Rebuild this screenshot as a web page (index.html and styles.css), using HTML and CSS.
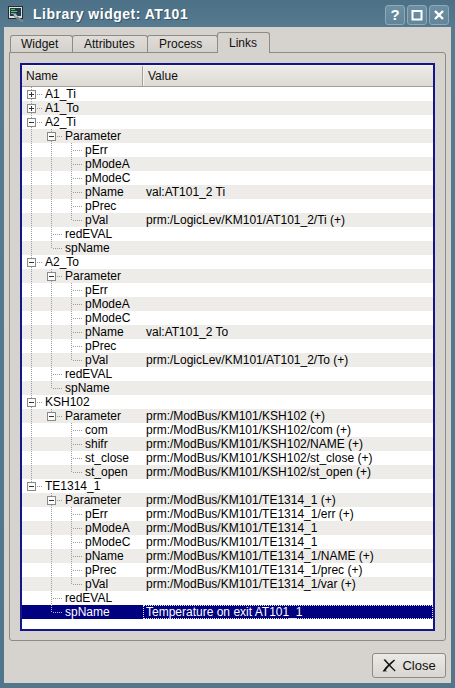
FILE: index.html
```html
<!DOCTYPE html>
<html>
<head>
<meta charset="utf-8">
<link rel="stylesheet" href="styles.css">
</head>
<body>
<div class="window">
  <div class="titlebar">
    <svg class="appicon" width="16" height="16" viewBox="0 0 16 16">
      <rect x="0.5" y="0.5" width="14" height="12" fill="#d9dee3" stroke="#2b2b2b"/>
      <rect x="2" y="2" width="11" height="8" fill="#203c4c"/>
      <path d="M3 3.5h4M3 5.5h6M3 7.5h3" stroke="#62c46e" stroke-width="1"/>
      <path d="M7 10 L14 15" stroke="#7f858a" stroke-width="2.6" stroke-linecap="round"/>
      <path d="M6.2 7.8 L9 11" stroke="#b5babe" stroke-width="2.4"/>
    </svg>
    <div class="title">Library widget: AT101</div>
    <div class="tbuttons">
      <div class="tbtn help">?</div>
      <div class="tbtn"><svg width="12" height="12" viewBox="0 0 12 12"><rect x="1.5" y="2" width="9" height="8.5" fill="none" stroke="#fff" stroke-width="2"/></svg></div>
      <div class="tbtn"><svg width="12" height="12" viewBox="0 0 12 12"><path d="M2 2 L10 10 M10 2 L2 10" stroke="#fff" stroke-width="2.4"/></svg></div>
    </div>
  </div>
  <div class="client">
    <div class="tabbar">
      <div class="tab w1">Widget</div>
      <div class="tab w2">Attributes</div>
      <div class="tab w3">Process</div>
      <div class="tab w4 sel">Links</div>
    </div>
    <div class="pane">
      <div class="frame">
        <div class="header">
          <div class="hcell hname">Name</div>
          <div class="hcell hval">Value</div>
        </div>
        <div class="rows">
          <div class="row"><div class="name"><span class="g tee"><span class="box plus"></span></span><span class="t">A1_Ti</span></div><div class="val"></div></div>
          <div class="row"><div class="name"><span class="g tee"><span class="box plus"></span></span><span class="t">A1_To</span></div><div class="val"></div></div>
          <div class="row"><div class="name"><span class="g tee"><span class="box minus"></span></span><span class="t">A2_Ti</span></div><div class="val"></div></div>
          <div class="row"><div class="name"><span class="g pipe"></span><span class="g tee"><span class="box minus"></span></span><span class="t">Parameter</span></div><div class="val"></div></div>
          <div class="row"><div class="name"><span class="g pipe"></span><span class="g pipe"></span><span class="g tee"></span><span class="t">pErr</span></div><div class="val"></div></div>
          <div class="row"><div class="name"><span class="g pipe"></span><span class="g pipe"></span><span class="g tee"></span><span class="t">pModeA</span></div><div class="val"></div></div>
          <div class="row"><div class="name"><span class="g pipe"></span><span class="g pipe"></span><span class="g tee"></span><span class="t">pModeC</span></div><div class="val"></div></div>
          <div class="row"><div class="name"><span class="g pipe"></span><span class="g pipe"></span><span class="g tee"></span><span class="t">pName</span></div><div class="val">val:AT101_2 Ti</div></div>
          <div class="row"><div class="name"><span class="g pipe"></span><span class="g pipe"></span><span class="g tee"></span><span class="t">pPrec</span></div><div class="val"></div></div>
          <div class="row"><div class="name"><span class="g pipe"></span><span class="g pipe"></span><span class="g ell"></span><span class="t">pVal</span></div><div class="val">prm:/LogicLev/KM101/AT101_2/Ti (+)</div></div>
          <div class="row"><div class="name"><span class="g pipe"></span><span class="g tee"></span><span class="t">redEVAL</span></div><div class="val"></div></div>
          <div class="row"><div class="name"><span class="g pipe"></span><span class="g ell"></span><span class="t">spName</span></div><div class="val"></div></div>
          <div class="row"><div class="name"><span class="g tee"><span class="box minus"></span></span><span class="t">A2_To</span></div><div class="val"></div></div>
          <div class="row"><div class="name"><span class="g pipe"></span><span class="g tee"><span class="box minus"></span></span><span class="t">Parameter</span></div><div class="val"></div></div>
          <div class="row"><div class="name"><span class="g pipe"></span><span class="g pipe"></span><span class="g tee"></span><span class="t">pErr</span></div><div class="val"></div></div>
          <div class="row"><div class="name"><span class="g pipe"></span><span class="g pipe"></span><span class="g tee"></span><span class="t">pModeA</span></div><div class="val"></div></div>
          <div class="row"><div class="name"><span class="g pipe"></span><span class="g pipe"></span><span class="g tee"></span><span class="t">pModeC</span></div><div class="val"></div></div>
          <div class="row"><div class="name"><span class="g pipe"></span><span class="g pipe"></span><span class="g tee"></span><span class="t">pName</span></div><div class="val">val:AT101_2 To</div></div>
          <div class="row"><div class="name"><span class="g pipe"></span><span class="g pipe"></span><span class="g tee"></span><span class="t">pPrec</span></div><div class="val"></div></div>
          <div class="row"><div class="name"><span class="g pipe"></span><span class="g pipe"></span><span class="g ell"></span><span class="t">pVal</span></div><div class="val">prm:/LogicLev/KM101/AT101_2/To (+)</div></div>
          <div class="row"><div class="name"><span class="g pipe"></span><span class="g tee"></span><span class="t">redEVAL</span></div><div class="val"></div></div>
          <div class="row"><div class="name"><span class="g pipe"></span><span class="g ell"></span><span class="t">spName</span></div><div class="val"></div></div>
          <div class="row"><div class="name"><span class="g tee"><span class="box minus"></span></span><span class="t">KSH102</span></div><div class="val"></div></div>
          <div class="row"><div class="name"><span class="g pipe"></span><span class="g ell"><span class="box minus"></span></span><span class="t">Parameter</span></div><div class="val">prm:/ModBus/KM101/KSH102 (+)</div></div>
          <div class="row"><div class="name"><span class="g pipe"></span><span class="g"></span><span class="g tee"></span><span class="t">com</span></div><div class="val">prm:/ModBus/KM101/KSH102/com (+)</div></div>
          <div class="row"><div class="name"><span class="g pipe"></span><span class="g"></span><span class="g tee"></span><span class="t">shifr</span></div><div class="val">prm:/ModBus/KM101/KSH102/NAME (+)</div></div>
          <div class="row"><div class="name"><span class="g pipe"></span><span class="g"></span><span class="g tee"></span><span class="t">st_close</span></div><div class="val">prm:/ModBus/KM101/KSH102/st_close (+)</div></div>
          <div class="row"><div class="name"><span class="g pipe"></span><span class="g"></span><span class="g ell"></span><span class="t">st_open</span></div><div class="val">prm:/ModBus/KM101/KSH102/st_open (+)</div></div>
          <div class="row"><div class="name"><span class="g ell"><span class="box minus"></span></span><span class="t">TE1314_1</span></div><div class="val"></div></div>
          <div class="row"><div class="name"><span class="g"></span><span class="g tee"><span class="box minus"></span></span><span class="t">Parameter</span></div><div class="val">prm:/ModBus/KM101/TE1314_1 (+)</div></div>
          <div class="row"><div class="name"><span class="g"></span><span class="g pipe"></span><span class="g tee"></span><span class="t">pErr</span></div><div class="val">prm:/ModBus/KM101/TE1314_1/err (+)</div></div>
          <div class="row"><div class="name"><span class="g"></span><span class="g pipe"></span><span class="g tee"></span><span class="t">pModeA</span></div><div class="val">prm:/ModBus/KM101/TE1314_1</div></div>
          <div class="row"><div class="name"><span class="g"></span><span class="g pipe"></span><span class="g tee"></span><span class="t">pModeC</span></div><div class="val">prm:/ModBus/KM101/TE1314_1</div></div>
          <div class="row"><div class="name"><span class="g"></span><span class="g pipe"></span><span class="g tee"></span><span class="t">pName</span></div><div class="val">prm:/ModBus/KM101/TE1314_1/NAME (+)</div></div>
          <div class="row"><div class="name"><span class="g"></span><span class="g pipe"></span><span class="g tee"></span><span class="t">pPrec</span></div><div class="val">prm:/ModBus/KM101/TE1314_1/prec (+)</div></div>
          <div class="row"><div class="name"><span class="g"></span><span class="g pipe"></span><span class="g ell"></span><span class="t">pVal</span></div><div class="val">prm:/ModBus/KM101/TE1314_1/var (+)</div></div>
          <div class="row"><div class="name"><span class="g"></span><span class="g tee"></span><span class="t">redEVAL</span></div><div class="val"></div></div>
          <div class="row sel"><div class="name"><span class="g"></span><span class="g ell"></span><span class="t">spName</span></div><div class="val focus">Temperature on exit AT101_1</div></div>
        </div>
      </div>
    </div>
    <div class="buttons">
      <div class="btn">
        <svg width="14" height="13" viewBox="0 0 14 13">
          <path d="M1.5 0.8 C4 3.5 7.5 7.5 12.8 12.6 L13.6 11.6 C9 7 5.5 3 3.2 0.2 Z" fill="#111"/>
          <path d="M12.2 0.6 L13 1.4 C9 5 5.5 8.5 3.6 11.6 L5.6 12.2 L0.6 12.6 L1.2 11.4 C3.8 7.6 8 3.8 12.2 0.6 Z" fill="#111"/>
        </svg>
        <span>Close</span>
      </div>
    </div>
  </div>
</div>
</body>
</html>
```
FILE: styles.css
```css
html, body {
  margin: 0;
  padding: 0;
}
body {
  width: 455px;
  height: 688px;
  overflow: hidden;
  font-family: "Liberation Sans", Arial, sans-serif;
  font-size: 12px;
  color: #000;
}
.window {
  box-sizing: border-box;
  width: 455px;
  height: 688px;
  display: flex;
  flex-direction: column;
  background: linear-gradient(#4c7086 0, #567a8f 27px, #51758a 100%);
  padding: 0 4px 5px 4px;
}
.titlebar {
  height: 27px;
  flex-shrink: 0;
  display: flex;
  align-items: center;
  padding: 0 2px 0 4px;
}
.appicon {
  flex-shrink: 0;
  margin-top: 1px;
}
.title {
  margin-left: 9px;
  flex: 1;
  color: #fff;
  font-family: "Liberation Sans", Arial, sans-serif;
  font-weight: bold;
  font-size: 14px;
  letter-spacing: 0.5px;
  text-shadow: 1px 1px 0 rgba(20, 40, 55, 0.45);
}
.tbuttons {
  display: flex;
  gap: 2px;
  align-self: flex-start;
  margin-top: 5px;
}
.tbtn {
  box-sizing: border-box;
  width: 20px;
  height: 20px;
  border: 1px solid #8fa9b8;
  border-radius: 3px;
  background: linear-gradient(#6d8fa3, #628598);
  display: flex;
  align-items: center;
  justify-content: center;
  color: #fff;
}
.tbtn.help {
  font-weight: bold;
  font-size: 15px;
  line-height: 18px;
}
.client {
  flex: 1;
  background: #d6d3ce;
  display: flex;
  flex-direction: column;
  padding: 5px 5px 0 5px;
}
.tabbar {
  height: 20px;
  display: flex;
  align-items: flex-end;
  padding-left: 1px;
  flex-shrink: 0;
}
.tab {
  box-sizing: border-box;
  height: 17px;
  border: 1px solid #8e8b86;
  border-bottom: none;
  border-radius: 3px 3px 0 0;
  background: linear-gradient(#e0ddd9, #d4d1cc);
  padding-left: 11px;
  line-height: 16px;
  font-size: 12px;
  color: #111;
  margin-right: -1px;
  white-space: nowrap;
}
.tab.w1 { width: 63px; padding-left: 10px; }
.tab.w2 { width: 76px; }
.tab.w3 { width: 71px; }
.tab.w4 { width: 53px; }
.tab.sel {
  height: 21px;
  margin-bottom: -1px;
  background: #d6d3ce;
  position: relative;
  z-index: 1;
  line-height: 20px;
}
.pane {
  box-sizing: border-box;
  height: 589px;
  flex-shrink: 0;
  border: 1px solid #8e8b86;
  border-radius: 0 3px 3px 3px;
  padding: 10px 10px 9px 10px;
  display: flex;
  flex-direction: column;
}
.frame {
  flex: 1;
  border: 2px solid #15158a;
  background: #fff;
  display: flex;
  flex-direction: column;
  min-height: 0;
}
.header {
  box-sizing: border-box;
  height: 22px;
  flex-shrink: 0;
  display: flex;
  background: linear-gradient(#eeece8, #dddad5);
  border-bottom: 1px solid #a29e98;
  border-top: 1px solid #f6f5f3;
}
.hcell {
  line-height: 20px;
  font-size: 12px;
  color: #111;
  padding-left: 4px;
  box-sizing: border-box;
}
.hname {
  width: 121px;
  border-right: 1px solid #a29e98;
}
.hval {
  flex: 1;
  border-left: 1px solid #f4f3f0;
}
.rows {
  flex: 1;
  --lc: #9c9c9c;
}
.row {
  display: flex;
  height: 14px;
  background: #fff;
}
.row:nth-child(even) {
  background: #eeece9;
}
.row.sel {
  background: #000080;
  color: #fff;
  --lc: #b8b8d8;
}
.name {
  width: 121px;
  flex-shrink: 0;
  display: flex;
  overflow: hidden;
  white-space: nowrap;
}
.t {
  padding-left: 3px;
  line-height: 14px;
}
.val {
  flex: 1;
  box-sizing: border-box;
  padding-left: 3px;
  line-height: 14px;
  white-space: nowrap;
  overflow: hidden;
}
.val.focus {
  outline: 1px dotted #e8e8f0;
  outline-offset: -1px;
}
.g {
  width: 20px;
  height: 14px;
  flex-shrink: 0;
  display: block;
  background-repeat: no-repeat;
}
.g.pipe {
  background-image: repeating-linear-gradient(to bottom, var(--lc) 0 1px, transparent 1px 2px);
  background-position: 9px 0;
  background-size: 1px 14px;
}
.g.tee {
  background-image:
    repeating-linear-gradient(to bottom, var(--lc) 0 1px, transparent 1px 2px),
    repeating-linear-gradient(to right, var(--lc) 0 1px, transparent 1px 2px);
  background-position: 9px 0, 11px 7px;
  background-size: 1px 14px, 9px 1px;
}
.g.ell {
  background-image:
    repeating-linear-gradient(to bottom, var(--lc) 0 1px, transparent 1px 2px),
    repeating-linear-gradient(to right, var(--lc) 0 1px, transparent 1px 2px);
  background-position: 9px 0, 11px 7px;
  background-size: 1px 8px, 9px 1px;
}
.box {
  display: block;
  box-sizing: border-box;
  width: 9px;
  height: 9px;
  margin: 3px 0 0 5px;
  border: 1px solid #8a8a8a;
  background-color: #fcfcfc;
  background-repeat: no-repeat;
}
.box.minus {
  background-image: linear-gradient(#333, #333);
  background-position: 1px 3px;
  background-size: 5px 1px;
}
.box.plus {
  background-image: linear-gradient(#333, #333), linear-gradient(#333, #333);
  background-position: 1px 3px, 3px 1px;
  background-size: 5px 1px, 1px 5px;
}
.buttons {
  display: flex;
  justify-content: flex-end;
  padding: 12px 0 5px 0;
}
.btn {
  box-sizing: border-box;
  width: 74px;
  height: 25px;
  border: 1px solid #8e8b86;
  border-radius: 3px;
  background: linear-gradient(#ebe9e6, #d9d6d1);
  display: flex;
  align-items: center;
  justify-content: center;
  gap: 6px;
  font-size: 13px;
  color: #111;
}
```
